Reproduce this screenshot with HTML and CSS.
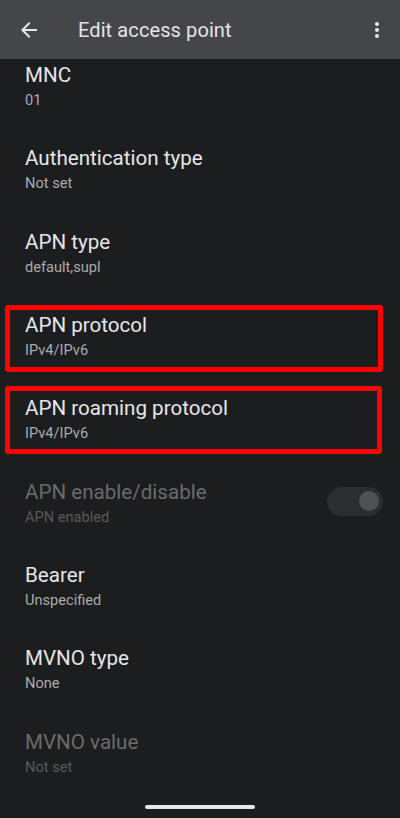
FILE: index.html
```html
<!DOCTYPE html>
<html lang="en">
  <head>
    <meta charset="UTF-8" />
    <meta name="viewport" content="width=device-width, initial-scale=1.0" />
    <title>Edit access point</title>
    <link rel="stylesheet" href="styles.css">
  </head>
  <body>
    <div class="screen">
      <header class="appbar">
        <svg class="icon back" viewBox="0 0 24 24"><path d="M20 11H7.83l5.59-5.59L12 4l-8 8 8 8 1.41-1.41L7.83 13H20v-2z"/></svg>
        <h1 class="title">Edit access point</h1>
        <svg class="icon more" viewBox="0 0 24 24"><path d="M12 8c1.1 0 2-.9 2-2s-.9-2-2-2-2 .9-2 2 .9 2 2 2zm0 2c-1.1 0-2 .9-2 2s.9 2 2 2 2-.9 2-2-.9-2-2-2zm0 6c-1.1 0-2 .9-2 2s.9 2 2 2 2-.9 2-2-.9-2-2-2z"/></svg>
      </header>

      <main class="content">
        <ul class="list">
          <li class="item">
            <div class="text"><div class="label">MNC</div><div class="value">01</div></div>
          </li>
          <li class="item">
            <div class="text"><div class="label">Authentication type</div><div class="value">Not set</div></div>
          </li>
          <li class="item">
            <div class="text"><div class="label">APN type</div><div class="value">default,supl</div></div>
          </li>
          <li class="item marked first-mark">
            <div class="text"><div class="label">APN protocol</div><div class="value">IPv4/IPv6</div></div>
          </li>
          <li class="item marked second-mark">
            <div class="text"><div class="label">APN roaming protocol</div><div class="value">IPv4/IPv6</div></div>
          </li>
          <li class="item disabled">
            <div class="text"><div class="label">APN enable/disable</div><div class="value">APN enabled</div></div>
            <div class="switch"><span class="thumb"></span></div>
          </li>
          <li class="item">
            <div class="text"><div class="label">Bearer</div><div class="value">Unspecified</div></div>
          </li>
          <li class="item">
            <div class="text"><div class="label">MVNO type</div><div class="value">None</div></div>
          </li>
          <li class="item disabled">
            <div class="text"><div class="label">MVNO value</div><div class="value">Not set</div></div>
          </li>
        </ul>
      </main>

      <div class="navbar"><span class="handle"></span></div>
    </div>
  </body>
</html>
```

FILE: styles.css
```css
body {
  margin: 0;
  background-color: #1c1d1f;
  font-family: Roboto, "Noto Sans", sans-serif;
}
.screen {
  width: 400px;
  height: 818px;
  display: flex;
  flex-direction: column;
  overflow: hidden;
  position: relative;
}
.appbar {
  height: 59px;
  flex: none;
  background-color: #45464a;
  display: flex;
  align-items: center;
  padding: 0 11px 0 17px;
  position: relative;
  z-index: 2;
}
.icon {
  width: 24px;
  height: 24px;
  fill: #e8e8ea;
  flex: none;
}
.title {
  flex: 1;
  margin: 0 0 0 37px;
  font-size: 20px;
  font-weight: 400;
  color: #e4e4e6;
  letter-spacing: 0.1px;
}
.content {
  flex: 1;
  overflow: hidden;
}
.list {
  list-style: none;
  margin: -14.67px 0 0 0;
  padding: 0;
}
.item {
  height: 83.33px;
  box-sizing: border-box;
  display: flex;
  align-items: center;
  padding: 0 17px 0 25px;
  position: relative;
}
.text {
  flex: 1;
}
.label {
  font-size: 20.6px;
  line-height: 26px;
  color: #e6e6e8;
}
.value {
  margin-top: 2px;
  font-size: 14.6px;
  line-height: 20px;
  color: #aaabad;
}
.disabled .label {
  color: #6a6b6d;
}
.disabled .value {
  color: #58595b;
}
.marked::after {
  content: "";
  position: absolute;
  left: 5px;
  border: 5px solid #ff0000;
  border-radius: 3px;
  box-sizing: border-box;
}
.first-mark::after {
  top: 10.67px;
  width: 378px;
  height: 67px;
}
.second-mark::after {
  top: 8.33px;
  width: 377px;
  height: 68px;
}
.switch {
  width: 56px;
  height: 29px;
  border-radius: 15px;
  background-color: #2c2d2f;
  display: flex;
  align-items: center;
  justify-content: flex-end;
  padding-right: 4px;
  box-sizing: border-box;
  margin-top: -3px;
}
.thumb {
  width: 20px;
  height: 20px;
  border-radius: 50%;
  background-color: #505154;
}
.navbar {
  position: absolute;
  left: 0;
  right: 0;
  bottom: 0;
  height: 30px;
  display: flex;
  justify-content: center;
  align-items: center;
}
.handle {
  width: 110px;
  height: 4px;
  border-radius: 2px;
  background-color: #e8e8e8;
  margin-top: 8px;
}
```
